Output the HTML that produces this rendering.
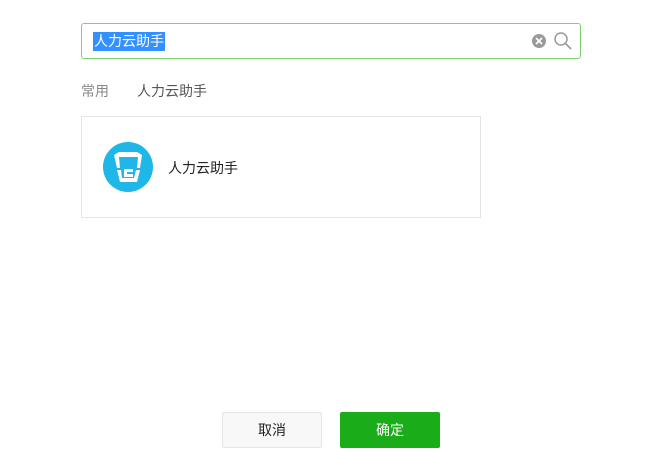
<!DOCTYPE html>
<html><head><meta charset="utf-8"><style>
body{margin:0;width:669px;height:471px;background:#fff;font-family:"Liberation Sans","Noto Sans CJK SC",sans-serif;position:relative;overflow:hidden}
.inp{position:absolute;left:81px;top:23px;width:498px;height:34px;border:1px solid #7fd06f;border-radius:3px}
.sel{position:absolute;left:11px;top:8px;height:19px;line-height:19px;background:#3390ff;color:#fff;font-size:14px;padding:0 1px}
.tab{position:absolute;top:82px;font-size:14px;color:#888;line-height:18px}
.card{position:absolute;left:81px;top:116px;width:398px;height:100px;border:1px solid #e4e4e4}
.btn{position:absolute;top:412px;width:98px;height:34px;line-height:34px;text-align:center;font-size:14px;border-radius:2px}
</style></head><body>
<div class="inp"><span class="sel">人力云助手</span>
<svg style="position:absolute;left:449px;top:9px" width="16" height="16"><circle cx="8" cy="8" r="7" fill="#9a9a9a"/><path d="M5 5L11 11M11 5L5 11" stroke="#fff" stroke-width="1.6"/></svg>
<svg style="position:absolute;left:471px;top:7px" width="20" height="20"><circle cx="8" cy="8" r="6" fill="none" stroke="#999" stroke-width="1.5"/><path d="M12.5 12.5L18 18" stroke="#999" stroke-width="1.6"/></svg>
</div>
<div class="tab" style="left:81px">常用</div>
<div class="tab" style="left:137px;color:#555">人力云助手</div>
<div class="card">
<svg style="position:absolute;left:21px;top:25px" width="50" height="50" viewBox="0 0 50 50"><circle cx="25" cy="25" r="25" fill="#1fb7e8"/>
<path d="M11 13L16 10L34 10L39 13L37 26L34 26L35 15L16 15L17 26L14 26Z" fill="#fff"/>
<path d="M14 28L17 40L34 40L37 28L33 28L31 36L19 36L18 28Z" fill="#fff"/>
<path d="M21 27h9v3h-6v2h6v3h-9v-3h0z" fill="#fff"/></svg>
<div style="position:absolute;left:86px;top:41px;font-size:14px;color:#222">人力云助手</div>
</div>
<div class="btn" style="left:222px;border:1px solid #e5e5e5;background:#f8f8f8;color:#222">取消</div>
<div class="btn" style="left:340px;top:412px;width:100px;height:36px;line-height:36px;background:#1aad19;color:#fff">确定</div>
</body></html>
